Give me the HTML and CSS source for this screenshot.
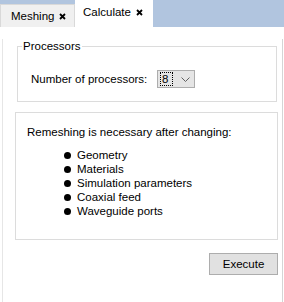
FILE: index.html
```html
<!DOCTYPE html>
<html lang="en">
<head>
    <meta charset="UTF-8">
    <title>Calculate</title>
    <link rel="stylesheet" href="styles.css">
</head>
<body>
    <div class="tabbar">
        <div class="tab">
            <span class="tab-label">Meshing</span>
            <svg class="tab-close" width="7" height="7" viewBox="0 0 7 7"><path d="M1 1L6 6M6 1L1 6" stroke="#000" stroke-width="1.8"/></svg>
        </div>
        <div class="tab active">
            <span class="tab-label">Calculate</span>
            <svg class="tab-close" width="7" height="7" viewBox="0 0 7 7"><path d="M1 1L6 6M6 1L1 6" stroke="#000" stroke-width="1.8"/></svg>
        </div>
    </div>
    <div class="page">
        <fieldset class="group group-proc">
            <legend>Processors</legend>
            <div class="proc-row">
                <span class="proc-label">Number of processors:</span>
                <div class="combo">
                    <span class="combo-value">8</span>
                    <svg class="combo-arrow" width="9" height="5" viewBox="0 0 9 5"><path d="M0.5 0.5L4.5 4.5L8.5 0.5" fill="none" stroke="#606060" stroke-width="1"/></svg>
                </div>
            </div>
        </fieldset>
        <fieldset class="group group-info">
            <p class="info-title">Remeshing is necessary after changing:</p>
            <ul class="info-list">
                <li>Geometry</li>
                <li>Materials</li>
                <li>Simulation parameters</li>
                <li>Coaxial feed</li>
                <li>Waveguide ports</li>
            </ul>
        </fieldset>
        <div class="actions">
            <button class="btn">Execute</button>
        </div>
    </div>
</body>
</html>
```

FILE: styles.css
```css
body {
    margin: 0;
    width: 284px;
    height: 302px;
    overflow: hidden;
    background: #fff;
    font: 11.5px "Liberation Sans", Arial, sans-serif;
    color: #000;
}
.tabbar {
    display: flex;
    align-items: flex-end;
    height: 27px;
    background: #b1c5df;
}
.tab {
    display: flex;
    align-items: center;
    box-sizing: border-box;
    width: 75px;
    height: 23px;
    padding: 0 0 0 10px;
    background: #f0f0f0;
    border: 1px solid #d9d9d9;
    border-bottom: none;
}
.tab.active {
    width: 78px;
    height: 28px;
    margin-bottom: -1px;
    padding: 0 0 5px 7px;
    background: #fff;
    border-color: #fff;
}
.tab-label {
    flex: 1;
}
.tab-close {
    margin-right: 8px;
}
.tab.active .tab-close {
    margin-right: 9px;
}
.page {
    height: 275px;
    margin: 0 1px 0 2px;
    border-left: 1px solid #e6e6e6;
    border-right: 1px solid #d5d5d5;
    background: #fff;
}
.group {
    border: 1px solid #dcdcdc;
    padding: 0;
    min-width: 0;
}
.group-proc {
    margin: 12px 5px 0 14px;
}
.group-proc legend {
    margin-left: 4px;
    padding: 0 1px;
    line-height: 14px;
}
.proc-row {
    display: flex;
    align-items: center;
    height: 18px;
    margin: 17px 0 13px 13px;
}
.proc-label {
    width: 126px;
}
.combo {
    display: flex;
    align-items: center;
    box-sizing: border-box;
    width: 38px;
    height: 18px;
    padding: 0 0 0 2px;
    background: #e5e5e5;
    border: 1px solid #adadad;
}
.combo-value {
    box-sizing: border-box;
    width: 13px;
    height: 14px;
    line-height: 12px;
    padding-left: 1px;
    border: 1px dotted #000;
}
.combo-arrow {
    margin-left: 8px;
}
.group-info {
    margin: 10px 4px 0 12px;
    padding: 12px 0 21px 11px;
}
.info-title {
    margin: 0;
    line-height: 14px;
}
.info-list {
    list-style: none;
    margin: 9px 0 0;
    padding: 0 0 0 37px;
}
.info-list li {
    display: flex;
    align-items: center;
    line-height: 14px;
}
.info-list li::before {
    content: "";
    width: 7px;
    height: 7px;
    margin-right: 6px;
    border-radius: 50%;
    background: #000;
}
.actions {
    display: flex;
    justify-content: flex-end;
    margin: 13px 4px 0 0;
}
.btn {
    width: 69px;
    height: 22px;
    padding: 0;
    background: #e1e1e1;
    border: 1px solid #adadad;
    border-radius: 0;
    font: inherit;
    color: #000;
}
```
